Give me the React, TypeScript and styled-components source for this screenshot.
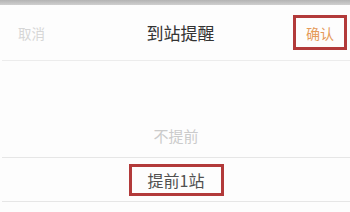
import React from "react";
import styled, { createGlobalStyle } from "styled-components";

const Global = createGlobalStyle`
  html, body { margin: 0; padding: 0; background: #fdfdfd; }
  body { font-family: "Noto Sans CJK SC", "Noto Sans", sans-serif; }
`;

const Screen = styled.div`
  width: 350px;
  height: 212px;
  overflow: hidden;
  background: #fdfdfd;
  display: flex;
  flex-direction: column;
`;

const TopShade = styled.div`
  height: 5px;
  background: linear-gradient(#b4b4b4, #cfcfcf);
  flex-shrink: 0;
`;

const Header = styled.div`
  height: 56px;
  margin-left: 2px;
  border-bottom: 1px solid #ececec;
  display: grid;
  grid-template-columns: 1fr auto 1fr;
  align-items: center;
  padding: 0 3px 0 16px;
  box-sizing: border-box;
`;

const Cancel = styled.span`
  font-size: 13.5px;
  color: #d6d6d6;
  justify-self: start;
`;

const Title = styled.span`
  font-size: 17px;
  color: #333;
  margin-left: -4px;
`;

const Highlight = styled.div<{ $w: number; $h: number }>`
  width: ${(p) => p.$w}px;
  height: ${(p) => p.$h}px;
  box-sizing: border-box;
  border: 3px solid #b23a3a;
  display: flex;
  align-items: center;
  justify-content: center;
`;

const ConfirmWrap = styled.div`
  justify-self: end;
  margin-top: 0;
`;

const Confirm = styled.span`
  font-size: 14px;
  color: #e59a58;
`;

const Picker = styled.div`
  padding-top: 53px;
  display: flex;
  flex-direction: column;
`;

const Row = styled.div<{ $line?: boolean }>`
  height: 44px;
  margin-left: 2px;
  display: flex;
  align-items: center;
  justify-content: center;
  border-bottom: ${(p) => (p.$line ? "1px solid #e6e6e6" : "none")};
  box-sizing: border-box;
`;

const Option = styled.span<{ $active?: boolean }>`
  font-size: ${(p) => (p.$active ? 16 : 15)}px;
  color: ${(p) => (p.$active ? "#505050" : "#cbcbcb")};
`;

export default function App() {
  return (
    <Screen>
      <Global />
      <TopShade />
      <Header>
        <Cancel>取消</Cancel>
        <Title>到站提醒</Title>
        <ConfirmWrap>
          <Highlight $w={54} $h={35}>
            <Confirm>确认</Confirm>
          </Highlight>
        </ConfirmWrap>
      </Header>
      <Picker>
        <Row $line>
          <Option>不提前</Option>
        </Row>
        <Row $line>
          <Highlight $w={95} $h={32}>
            <Option $active>提前1站</Option>
          </Highlight>
        </Row>
      </Picker>
    </Screen>
  );
}
